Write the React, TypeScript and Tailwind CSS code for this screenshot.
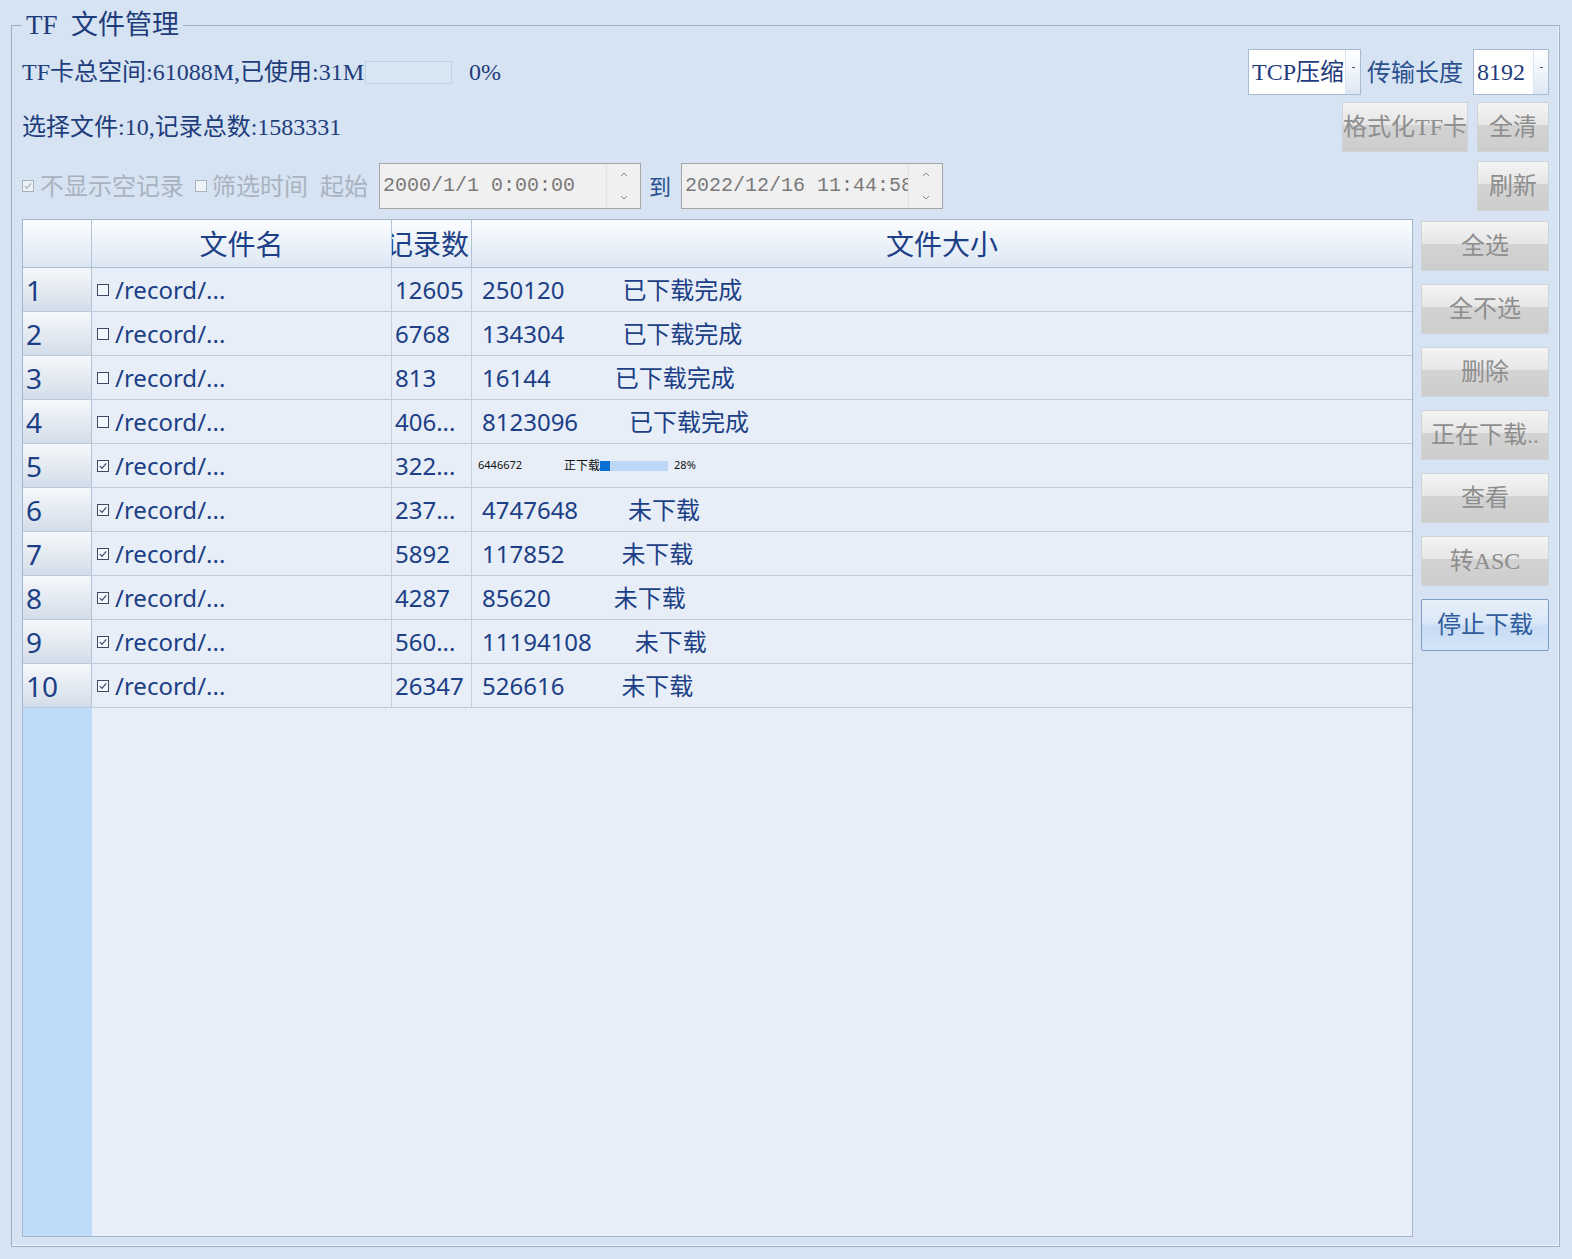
import React from "react";

type Row = {
  no: number;
  checked: boolean;
  count: string;
  size: string;
  status: string;
  gap: string;
  progress?: boolean;
};

const ROWS: Row[] = [
  { no: 1, checked: false, count: "12605", size: "250120", status: "已下载完成", gap: "ml-[58px]" },
  { no: 2, checked: false, count: "6768", size: "134304", status: "已下载完成", gap: "ml-[58px]" },
  { no: 3, checked: false, count: "813", size: "16144", status: "已下载完成", gap: "ml-[64px]" },
  { no: 4, checked: false, count: "406...", size: "8123096", status: "已下载完成", gap: "ml-[51px]" },
  { no: 5, checked: true, count: "322...", size: "6446672", status: "正下载", gap: "", progress: true },
  { no: 6, checked: true, count: "237...", size: "4747648", status: "未下载", gap: "ml-[50px]" },
  { no: 7, checked: true, count: "5892", size: "117852", status: "未下载", gap: "ml-[57px]" },
  { no: 8, checked: true, count: "4287", size: "85620", status: "未下载", gap: "ml-[63px]" },
  { no: 9, checked: true, count: "560...", size: "11194108", status: "未下载", gap: "ml-[43px]" },
  { no: 10, checked: true, count: "26347", size: "526616", status: "未下载", gap: "ml-[57px]" },
];

const SIDE_BUTTONS = ["全选", "全不选", "删除", "正在下载..", "查看", "转ASC"];

const SERIF = "font-['Liberation_Serif','Noto_Sans_CJK_SC',serif]";
const SANS = "font-['Noto_Sans','Noto_Sans_CJK_SC',sans-serif]";
const MONO = "font-['Liberation_Mono','Noto_Sans_CJK_SC',monospace]";

function Box({ checked, muted }: { checked: boolean; muted?: boolean }) {
  const stroke = muted ? "#a9b3bf" : "#3c4a66";
  return (
    <svg width="12" height="12" viewBox="0 0 12 12" className="shrink-0">
      <rect x="0.5" y="0.5" width="11" height="11" fill={muted ? "#eef2f7" : "#f4f7fb"} stroke={stroke} />
      {checked && <path d="M2.8 6.2 L5 8.4 L9.2 3.4" fill="none" stroke={stroke} strokeWidth="1.2" />}
    </svg>
  );
}

function GrayButton({ label, className }: { label: string; className: string }) {
  return (
    <div
      className={`${className} relative flex items-center justify-center overflow-visible border border-[#d0d3d8] bg-[linear-gradient(to_bottom,#f4f4f4_0%,#e6e6e6_45%,#d3d3d3_46%,#cdcdcd_100%)] ${SERIF} text-[24px] text-[#8e8e8e] whitespace-nowrap`}
    >
      {label}
    </div>
  );
}

function Combo({ value, width }: { value: string; width: string }) {
  return (
    <div className={`${width} h-[46px] flex border border-[#a7bbd2] bg-white`}>
      <div className={`flex-1 flex items-center pl-[3px] ${SERIF} text-[24px] text-[#1f3c7b] whitespace-nowrap overflow-hidden`}>
        {value}
      </div>
      <div className="w-[15px] border-l border-[#dbe5f1] bg-[linear-gradient(to_bottom,#ffffff,#dde8f5)] flex justify-center pt-[17px]">
        <div className="w-[3px] h-[1px] bg-[#555]" />
      </div>
    </div>
  );
}

function DateBox({ value }: { value: string }) {
  return (
    <div className="w-[262px] h-[46px] flex border border-[#a6a6a6] bg-[#f0f0f0]">
      <div className={`flex-1 flex items-center pl-[3px] ${MONO} text-[20px] text-[#7a7a7a] whitespace-pre overflow-hidden`}>
        {value}
      </div>
      <div className="w-[34px] flex flex-col items-center justify-between py-[8px] border-l border-[#e2e2e2]">
        <svg width="8" height="5" viewBox="0 0 8 5">
          <path d="M1 4 L4 1 L7 4" fill="none" stroke="#8a8a8a" strokeWidth="1" />
        </svg>
        <svg width="8" height="5" viewBox="0 0 8 5">
          <path d="M1 1 L4 4 L7 1" fill="none" stroke="#8a8a8a" strokeWidth="1" />
        </svg>
      </div>
    </div>
  );
}

export default function App() {
  return (
    <div className="w-full h-[1259px] bg-[#d5e3f2] pt-[10px] pl-[11px] pr-[12px] overflow-hidden">
      <fieldset className="h-[1237px] border border-[#9eb0c6] px-[10px] pb-[8px] shadow-[inset_-1px_-1px_0_#eef4fa]">
        <legend className={`ml-0 px-[4px] h-[30px] leading-[30px] ${SERIF} text-[27px] text-[#1f3c7b] whitespace-pre`}>
          TF  文件管理
        </legend>

        {/* row 1: card space + transfer options */}
        <div className="mt-[9px] h-[46px] flex items-center">
          <span className={`${SERIF} text-[24px] text-[#1f3c7b] whitespace-nowrap`}>TF卡总空间:61088M,已使用:31M</span>
          <div className="ml-[1px] w-[87px] h-[23px] border border-[#c2d2e4] bg-[#d9e6f4]" />
          <span className={`ml-[17px] ${SERIF} text-[24px] text-[#1f3c7b]`}>0%</span>
          <div className="ml-auto flex items-center">
            <Combo value="TCP压缩" width="w-[113px]" />
            <span className={`ml-[6px] ${SANS} text-[24px] text-[#2b4f8e] whitespace-nowrap`}>传输长度</span>
            <div className="ml-[10px]">
              <Combo value="8192" width="w-[76px]" />
            </div>
          </div>
        </div>

        {/* row 2: selection summary */}
        <div className="mt-[7px] h-[50px] flex items-center">
          <span className={`${SERIF} text-[24px] text-[#1f3c7b] whitespace-nowrap`}>选择文件:10,记录总数:1583331</span>
          <div className="ml-auto flex gap-[9px]">
            <GrayButton label="格式化TF卡" className="w-[126px] h-[50px]" />
            <GrayButton label="全清" className="w-[72px] h-[50px]" />
          </div>
        </div>

        {/* row 3: filters */}
        <div className="mt-[9px] h-[50px] flex items-center">
          <Box checked muted />
          <span className={`ml-[6px] ${SANS} text-[24px] text-[#a9b3bf] whitespace-nowrap`}>不显示空记录</span>
          <div className="ml-[11px]">
            <Box checked={false} muted />
          </div>
          <span className={`ml-[5px] ${SANS} text-[24px] text-[#a9b3bf] whitespace-nowrap`}>筛选时间</span>
          <span className={`ml-[12px] ${SANS} text-[24px] text-[#a9b3bf] whitespace-nowrap`}>起始</span>
          <div className="ml-[11px]">
            <DateBox value="2000/1/1 0:00:00" />
          </div>
          <span className={`ml-[8px] ${SANS} text-[22px] text-[#2b4f8e]`}>到</span>
          <div className="ml-[10px]">
            <DateBox value="2022/12/16 11:44:58" />
          </div>
          <div className="ml-auto">
            <GrayButton label="刷新" className="w-[72px] h-[50px]" />
          </div>
        </div>

        {/* table + side buttons */}
        <div className="mt-[8px] h-[1018px] flex gap-[8px]">
          <div className={`flex-1 flex flex-col border border-[#a3b6cc] bg-[#e7eef7] ${SANS} text-[#1c3f86] overflow-hidden`}>
            <div className="h-[48px] shrink-0 grid grid-cols-[69px_300px_80px_1fr] bg-[linear-gradient(to_bottom,#fbfdff,#dde7f3)] border-b border-[#a9bbd0]">
              <div className="border-r border-[#b3c3d6]" />
              <div className="border-r border-[#b3c3d6] flex items-center justify-center text-[28px]">文件名</div>
              <div className="border-r border-[#b3c3d6] flex items-center justify-end pr-[2px] overflow-hidden text-[28px] whitespace-nowrap">
                <span className="shrink-0">记录数</span>
              </div>
              <div className="flex items-center justify-center text-[28px]">文件大小</div>
            </div>

            {ROWS.map((r) => (
              <div key={r.no} className="h-[44px] shrink-0 grid grid-cols-[69px_300px_80px_1fr] border-b border-[#bccbdc]">
                <div className="border-r border-[#b3c3d6] bg-[linear-gradient(to_bottom,#f6f8fb,#d3dde9)] flex items-center pl-[3px] text-[28px]">
                  {r.no}
                </div>
                <div className="border-r border-[#c3d0df] flex items-center pl-[5px] text-[24px] whitespace-nowrap">
                  <Box checked={r.checked} />
                  <span className="ml-[6px]">/record/...</span>
                </div>
                <div className="border-r border-[#c3d0df] flex items-center pl-[3px] text-[24px] whitespace-nowrap overflow-hidden">
                  {r.count}
                </div>
                {r.progress ? (
                  <div className="flex items-center pl-[6px] text-[#111] whitespace-nowrap">
                    <span className="text-[11px]">{r.size}</span>
                    <span className="ml-[42px] text-[12px]">{r.status}</span>
                    <div className="w-[68px] h-[10px] bg-[#bdd8f6] flex">
                      <div className="w-[10px] h-full bg-[#0a6fd3]" />
                    </div>
                    <span className="ml-[6px] text-[11px]">28%</span>
                  </div>
                ) : (
                  <div className="flex items-center pl-[10px] text-[24px] whitespace-nowrap">
                    <span>{r.size}</span>
                    <span className={r.gap}>{r.status}</span>
                  </div>
                )}
              </div>
            ))}

            <div className="flex-1 flex">
              <div className="w-[69px] bg-[#bfdbfa]" />
              <div className="flex-1" />
            </div>
          </div>

          <div className="w-[128px] pt-[2px] flex flex-col gap-[13px]">
            {SIDE_BUTTONS.map((b) => (
              <GrayButton key={b} label={b} className="w-[128px] h-[50px]" />
            ))}
            <div
              className={`w-[128px] h-[52px] flex items-center justify-center rounded-[2px] border border-[#7d9dc6] bg-[linear-gradient(to_bottom,#e8f0fa_0%,#d9e7f6_45%,#c8dcf3_55%,#d3e5f8_100%)] ${SERIF} text-[24px] text-[#2e5b9c]`}
            >
              停止下载
            </div>
          </div>
        </div>
      </fieldset>
    </div>
  );
}
